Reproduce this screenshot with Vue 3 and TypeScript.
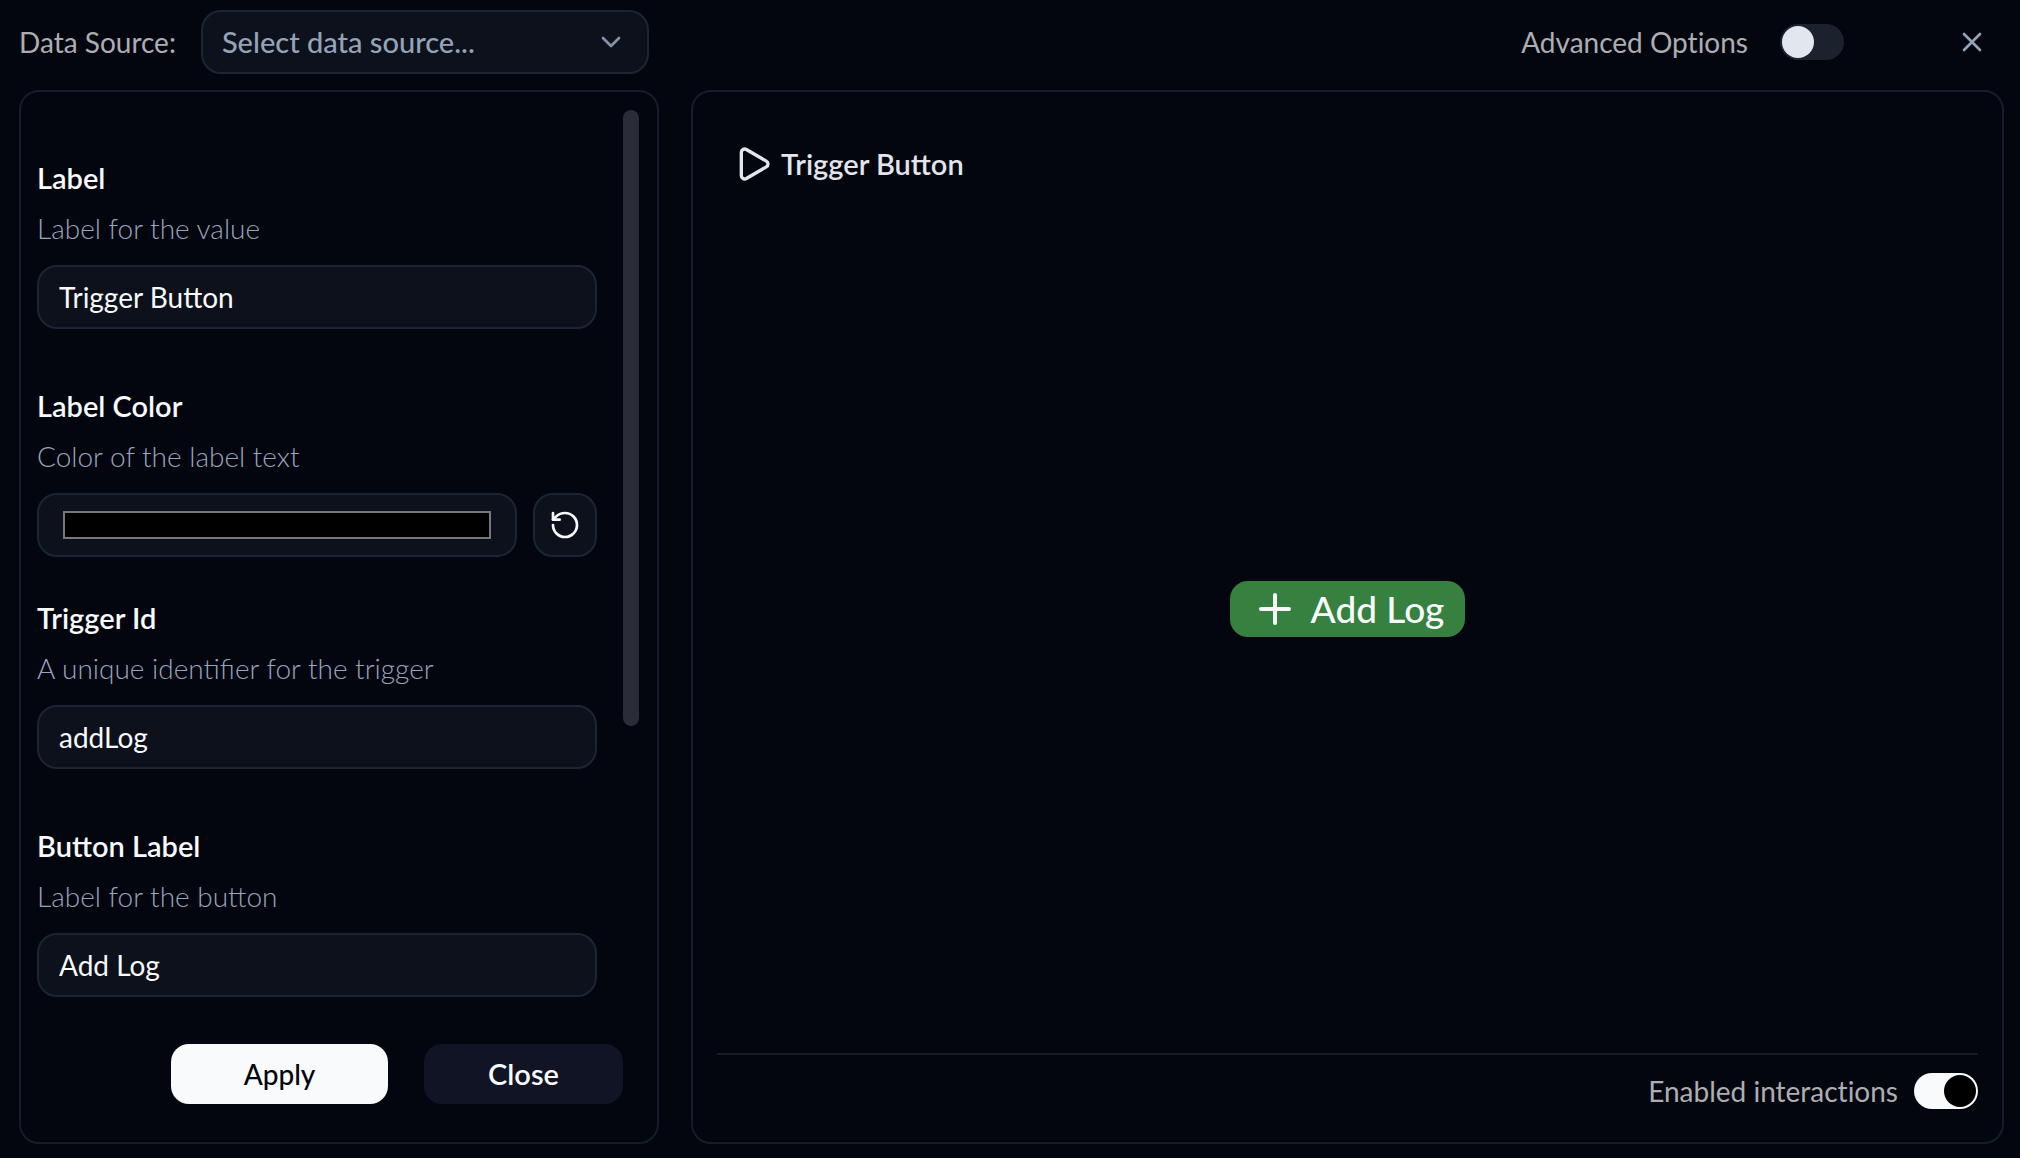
<script setup lang="ts">
import { ref } from 'vue'

interface Field {
  id: string
  label: string
  hint: string
  kind: 'text' | 'color'
  value: string
}

const fields = ref<Field[]>([
  { id: 'label', label: 'Label', hint: 'Label for the value', kind: 'text', value: 'Trigger Button' },
  { id: 'label-color', label: 'Label Color', hint: 'Color of the label text', kind: 'color', value: '#000000' },
  { id: 'trigger-id', label: 'Trigger Id', hint: 'A unique identifier for the trigger', kind: 'text', value: 'addLog' },
  { id: 'button-label', label: 'Button Label', hint: 'Label for the button', kind: 'text', value: 'Add Log' },
])

const dataSource = ref('')
const advanced = ref(false)
const interactions = ref(true)

function resetColor(field: Field) {
  field.value = '#000000'
}
</script>

<template>
  <main class="editor">
    <header class="topbar">
      <label class="muted" for="data-source">Data Source:</label>
      <div class="select-wrap">
        <select id="data-source" v-model="dataSource" class="control select">
          <option value="">Select data source...</option>
        </select>
        <svg class="chevron" viewBox="0 0 24 24" aria-hidden="true"><path d="m6 9 6 6 6-6" /></svg>
      </div>
      <div class="topbar-end">
        <label class="muted" for="advanced">Advanced Options</label>
        <input id="advanced" v-model="advanced" type="checkbox" class="switch" />
        <button type="button" class="dismiss" aria-label="Close editor">
          <svg viewBox="0 0 24 24" aria-hidden="true"><path d="M18 6 6 18M6 6l12 12" /></svg>
        </button>
      </div>
    </header>

    <div class="columns">
      <section class="panel settings">
        <div class="scroll-area">
          <form class="fields" @submit.prevent>
            <div v-for="field in fields" :key="field.id" class="field" :class="field.kind">
              <label class="field-label" :for="field.id">{{ field.label }}</label>
              <p class="hint">{{ field.hint }}</p>
              <input v-if="field.kind === 'text'" :id="field.id" v-model="field.value" type="text" class="control text-input" />
              <div v-else class="color-row">
                <input :id="field.id" v-model="field.value" type="color" class="control color-input" />
                <button type="button" class="control reset" aria-label="Reset color" @click="resetColor(field)">
                  <svg viewBox="0 0 24 24" aria-hidden="true">
                    <path d="M3 12a9 9 0 1 0 9-9 9.75 9.75 0 0 0-6.74 2.74L3 8" />
                    <path d="M3 3v5h5" />
                  </svg>
                </button>
              </div>
            </div>
          </form>
          <div class="track"><div class="thumb"></div></div>
        </div>
        <div class="actions">
          <button type="button" class="btn apply">Apply</button>
          <button type="button" class="btn close">Close</button>
        </div>
      </section>

      <section class="panel preview">
        <h2 class="title">
          <svg viewBox="0 0 24 24" aria-hidden="true">
            <path d="M5 5a2 2 0 0 1 3.008-1.728l11.997 6.998a2 2 0 0 1 .003 3.458l-12 7A2 2 0 0 1 5 19z" />
          </svg>
          Trigger Button
        </h2>
        <div class="stage">
          <button type="button" class="add-log">
            <svg viewBox="0 0 24 24" aria-hidden="true"><path d="M5 12h14M12 5v14" /></svg>
            Add Log
          </button>
        </div>
        <footer class="preview-footer">
          <label class="muted" for="interactions">Enabled interactions</label>
          <input id="interactions" v-model="interactions" type="checkbox" class="switch" />
        </footer>
      </section>
    </div>
  </main>
</template>

<style>
body {
  margin: 0;
  background: #03060f;
}
</style>

<style scoped>
.editor,
.editor * {
  box-sizing: border-box;
}

.editor {
  display: flex;
  flex-direction: column;
  min-height: 100vh;
  padding: 10px 16px 14px 19px;
  background: #03060f;
  color: #f8fafc;
  font-family: Lato, 'Liberation Sans', sans-serif;
  font-size: 28px;
  line-height: 40px;
}

button,
input,
select {
  margin: 0;
  font: inherit;
  color: inherit;
}

svg {
  flex: none;
  width: 32px;
  height: 32px;
  fill: none;
  stroke: currentColor;
  stroke-width: 2;
  stroke-linecap: round;
  stroke-linejoin: round;
}

.muted {
  color: #adaeb2;
  font-variant-ligatures: none;
}

.control {
  height: 64px;
  border: 2px solid #1c2535;
  border-radius: 20px;
  background: #0c111b;
}

.topbar {
  display: flex;
  align-items: center;
  margin-bottom: 16px;
}

.select-wrap {
  display: grid;
  flex: 0 1 448px;
  align-items: center;
  margin-left: 25px;
}

.select {
  grid-area: 1 / 1;
  width: 100%;
  padding: 0 56px 0 19px;
  appearance: none;
  color: #94a3b8;
  font-size: 29px;
  font-weight: 500;
}

.chevron {
  grid-area: 1 / 1;
  justify-self: end;
  margin-right: 22px;
  color: #8592a7;
  pointer-events: none;
}

.topbar-end {
  display: flex;
  align-items: center;
  margin-left: auto;
}

.switch {
  display: flex;
  flex: none;
  align-items: center;
  width: 64px;
  height: 36px;
  padding: 0 2px;
  appearance: none;
  border-radius: 18px;
  background: #1b222e;
}

.switch::before {
  width: 32px;
  height: 32px;
  border-radius: 50%;
  background: #e2e6ee;
  content: '';
}

.switch:checked {
  justify-content: flex-end;
  background: #f8fafc;
}

.switch:checked::before {
  background: #000;
}

.topbar-end .switch {
  margin-left: 32px;
}

.dismiss {
  display: flex;
  margin: 0 16px 0 112px;
  padding: 0;
  border: 0;
  background: none;
  color: #94a3b8;
}

.columns {
  display: grid;
  flex: 1;
  grid-template-columns: minmax(0, 640px) minmax(0, 1fr);
  gap: 32px;
}

.panel {
  display: flex;
  flex-direction: column;
  border: 2px solid #151d2c;
  border-radius: 20px;
}

.settings {
  padding: 18px 18px 38px 16px;
}

.scroll-area {
  display: flex;
  flex: 1;
  gap: 26px;
}

.fields {
  flex: 1;
  min-width: 0;
  padding-top: 48px;
}

.field {
  margin-bottom: 57px;
}

.field.color {
  margin-bottom: 41px;
}

.field:last-child {
  margin-bottom: 0;
}

.field-label {
  display: block;
  font-size: 29px;
  font-weight: 600;
}

.hint {
  margin: 10px 0 17px;
  color: #98a5bc;
  font-weight: 300;
}

.text-input {
  display: block;
  width: 100%;
  padding: 0 20px;
}

.color-row {
  display: flex;
  gap: 16px;
}

.color-input {
  flex: 1;
  min-width: 0;
  padding: 16px 24px;
}

.color-input::-webkit-color-swatch-wrapper {
  padding: 0;
}

.color-input::-webkit-color-swatch {
  border: 2px solid #777;
  border-radius: 0;
}

.reset {
  display: flex;
  flex: none;
  align-items: center;
  justify-content: center;
  width: 64px;
  padding: 0;
}

.track {
  width: 16px;
}

.thumb {
  height: 66%;
  border-radius: 8px;
  background: #2a2c37;
}

.actions {
  display: flex;
  justify-content: flex-end;
  gap: 36px;
  margin-right: 16px;
}

.btn {
  height: 60px;
  border: 0;
  border-radius: 18px;
  font-weight: 500;
}

.apply {
  width: 217px;
  background: #f8fafc;
  color: #02050e;
}

.close {
  width: 199px;
  background: #101425;
  font-size: 29px;
  font-weight: 600;
}

.preview {
  padding: 52px 24px 31px;
}

.title {
  display: flex;
  align-items: center;
  gap: 8px;
  margin: 0 0 0 16px;
  color: #e2e5ec;
  font-size: 29px;
  font-weight: 600;
}

.title svg {
  width: 40px;
  height: 40px;
}

.stage {
  display: flex;
  flex: 1;
  align-items: center;
  justify-content: center;
  padding-bottom: 19px;
}

.add-log {
  display: flex;
  align-items: center;
  gap: 12px;
  height: 56px;
  padding: 0 21px;
  border: 0;
  border-radius: 18px;
  background: #36813f;
  font-size: 37px;
  font-weight: 500;
}

.add-log svg {
  width: 48px;
  height: 48px;
}

.preview-footer {
  display: flex;
  align-items: center;
  justify-content: flex-end;
  gap: 16px;
  padding-top: 16px;
  border-top: 2px solid #151d2c;
}
</style>
